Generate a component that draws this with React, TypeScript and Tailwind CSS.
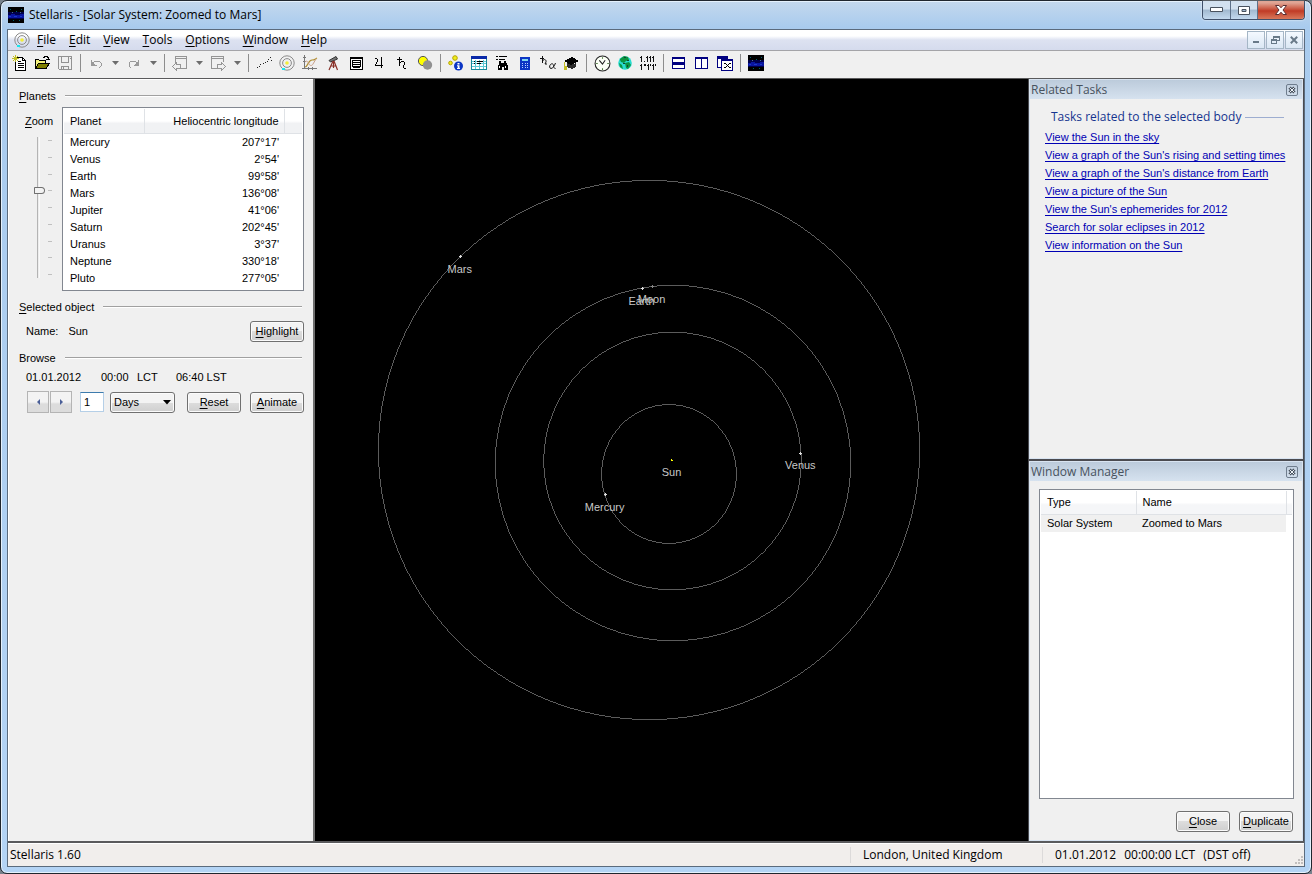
import type { ReactNode } from "react";

const ui = "font-['Open_Sans','Noto_Sans',sans-serif]";
const btn =
  "h-[21px] rounded-[3px] border border-[#707070] bg-linear-to-b from-[#f3f3f3] from-50% via-[#dddddd] via-50% to-[#cfcfcf] text-center shadow-[inset_0_0_0_1px_#fbfbfb]";

const planets: [string, string][] = [
  ["Mercury", "207°17'"],
  ["Venus", "2°54'"],
  ["Earth", "99°58'"],
  ["Mars", "136°08'"],
  ["Jupiter", "41°06'"],
  ["Saturn", "202°45'"],
  ["Uranus", "3°37'"],
  ["Neptune", "330°18'"],
  ["Pluto", "277°05'"],
];

const tasks = [
  "View the Sun in the sky",
  "View a graph of the Sun's rising and setting times",
  "View a graph of the Sun's distance from Earth",
  "View a picture of the Sun",
  "View the Sun's ephemerides for 2012",
  "Search for solar eclipses in 2012",
  "View information on the Sun",
];

const menus = ["File", "Edit", "View", "Tools", "Options", "Window", "Help"];

const bodies = [
  { name: "Mars", x: 144, y: 177, color: "#ddd" },
  { name: "Earth", x: 326, y: 209, color: "#ddd" },
  { name: "Moon", x: 336, y: 207, color: "#888" },
  { name: "Venus", x: 485, y: 374, color: "#ddd" },
  { name: "Sun", x: 356, y: 381, color: "#ff0" },
  { name: "Mercury", x: 289, y: 416, color: "#ddd" },
];

function Hot({ text }: { text: string }) {
  return (
    <>
      <span className="underline underline-offset-2">{text[0]}</span>
      {text.slice(1)}
    </>
  );
}

function Icon({ children, size = 16 }: { children: ReactNode; size?: number }) {
  return (
    <svg width={size} height={size} viewBox="0 0 16 16" fill="none" shapeRendering="crispEdges" aria-hidden="true">
      {children}
    </svg>
  );
}

function StarField({ size = 16 }: { size?: number }) {
  return (
    <Icon size={size}>
      <path fill="#000" d="M0 0h16v16H0z" />
      <path fill="#00004c" d="M0 5h16v7H0z" />
      <path fill="#0a16a0" d="M0 8h3V7h4v1h5V7h4v4H0z" />
      <path fill="#1c38c8" d="M1 9h2v1H1zM6 9h3v1H6zM12 9h2v1h-2z" />
      <path fill="#006070" d="M2 2h1v1H2zM8 4h1v1H8zM13 2h1v1h-1zM5 13h1v1H5zM11 13h1v1h-1z" />
      <path fill="#4a7090" d="M4 5h1v1H4zM12 5h1v1h-1z" />
    </Icon>
  );
}

function Orbits() {
  return (
    <svg width="16" height="16" viewBox="0 0 16 16" fill="none" aria-hidden="true">
      <circle cx="8" cy="8" r="7.2" stroke="#8a8a8a" />
      <circle cx="8" cy="8" r="4.4" stroke="#8a8a8a" />
      <circle cx="8" cy="8" r="1.8" fill="#f2ee3a" />
      <path d="M3 13h3v2H3z" fill="#18e6ee" />
    </svg>
  );
}

const icons: Record<string, ReactNode> = {
  New: (
    <Icon>
      <path d="M4.500 2.500h7l3 3v10h-10z" fill="#fff" stroke="#000" />
      <path d="M11.500 2.500v3h3M7 6.500h3M7 8.500h6M7 10.500h6M7 12.500h6" stroke="#000" />
      <path d="M4.500 0v7M1 3.500h7M2 1l5 5M7 1L2 6" stroke="#c3bf22" />
    </Icon>
  ),
  Open: (
    <Icon>
      <path d="M1.500 13.500v-9h3l1 1h6v3h-6z" fill="#f4f27c" stroke="#000" />
      <path d="M1.500 13.500l3-5h11l-3.500 5z" fill="#808000" stroke="#000" />
      <path d="M9 2.500h1v-1h3v1h1v2M12 4.500h4M14.500 2v3" stroke="#000" />
    </Icon>
  ),
  Save: (
    <Icon>
      <path d="M1.500 1.500h13v13h-12l-1-1zM4.500 2v5h7V2M4.500 15v-4h7v4M6.500 12v3M13 3.500h1" stroke="#929292" />
    </Icon>
  ),
  Undo: (
    <Icon>
      <path d="M3.500 5v5h5M4 9l3-3h4l2 2v3l-2 2" stroke="#999" />
      <path d="M3 6h1v1h1v1h1v1h1v2H3z" fill="#999" />
    </Icon>
  ),
  Redo: (
    <Icon>
      <path d="M12.500 5v5h-5M12 9L9 6H5L3 8v3l2 2" stroke="#999" />
      <path d="M13 6h-1v1h-1v1h-1v1H9v2h4z" fill="#999" />
    </Icon>
  ),
  Back: (
    <Icon>
      <path d="M3.500 8V1.500h11v12H8M4 3.500h10M.500 11.500l4-4v2h4v4h-4v2z" stroke="#959595" />
    </Icon>
  ),
  Forward: (
    <Icon>
      <path d="M13.500 7V1.500h-12v12H8M2 3.500h11M15.500 11.500l-4-4v2h-4v4h4v2z" stroke="#959595" />
    </Icon>
  ),
  Path: (
    <Icon>
      <path fill="#222" d="M1 12h1v1H1zM3 11h1v1H3zM4 9h1v1H4zM7 8h1v1H7zM9 7h1v1H9zM11 6h1v1h-1zM12 4h1v1h-1zM14 2h1v1h-1zM15 5h1v1h-1z" />
    </Icon>
  ),
  "Solar System": <Orbits />,
  Graph: (
    <svg width="16" height="16" viewBox="0 0 16 16" fill="none" aria-hidden="true">
      <path d="M2.500 0v14M0 13.500h15M1 2.500h3M1 6.500h3M6.500 12v3M10.500 12v3" stroke="#777" />
      <path d="M3 12C6 12 6 5 10 5c3 0 3-1 5-2" stroke="#b08f30" strokeWidth="1.200" />
      <path d="M3 7c2-2 3 0 4 2s3 2 4 0l3-5" stroke="#c9a08a" />
    </svg>
  ),
  Telescope: (
    <svg width="16" height="16" viewBox="0 0 16 16" fill="none" aria-hidden="true">
      <path d="M4 5.500l7-4 1.500 2.500-7 3z" fill="#777" stroke="#333" />
      <path d="M8.500 6v7M8 6l-4 9M9 6l3.500 9M6 11h5" stroke="#8a3028" strokeWidth="1.200" />
    </svg>
  ),
  List: (
    <Icon>
      <path d="M2.500 2.500h12v12h-12z" fill="#fff" stroke="#000" />
      <path d="M3 3h11v1H3zM4 5h9v1H4zM5 7h7v1H5zM5 9h7v1H5zM5 11h7v1H5zM4 5h1v8H4zM12 5h1v8h-1zM4 13h9v-1H4z" fill="#000" />
    </Icon>
  ),
  Jupiter: (
    <Icon>
      <path d="M4 3.500h2M6.500 4v3M5.500 7v2M4.500 9v2M4 10.500h8M10.500 2v11" stroke="#000" />
    </Icon>
  ),
  Saturn: (
    <Icon>
      <path d="M3 4.500h5M5.500 2v9M6 7.500h1M7 6.500h3M10.500 7v3M9.500 10v3M10 13.500h2" stroke="#000" />
    </Icon>
  ),
  Eclipse: (
    <svg width="16" height="16" viewBox="0 0 16 16" aria-hidden="true">
      <circle cx="6" cy="6" r="4.600" fill="#ff0" stroke="#555" />
      <circle cx="10.500" cy="10" r="4.700" fill="#919191" />
    </svg>
  ),
  "Planet information": (
    <svg width="16" height="16" viewBox="0 0 16 16" aria-hidden="true">
      <circle cx="7" cy="3" r="2.300" fill="#eded20" stroke="#b9a400" />
      <circle cx="2.500" cy="8" r="1.800" fill="#eded20" stroke="#b9a400" />
      <circle cx="10.500" cy="11" r="4.500" fill="#0b35c4" />
      <path d="M9.500 8h2v1.500h-2zM9 10.200h2.500V13H12v1H9v-1h.700v-1.800H9z" fill="#fff" />
    </svg>
  ),
  Calendar: (
    <Icon>
      <path d="M.500 2.500h15v12H.500z" fill="#fff" stroke="#168a9a" />
      <path d="M1 6.500h14M1 8.500h14M1 11.500h14M4.500 5v9M8.500 5v9M12.500 5v9" stroke="#5cc8d4" />
      <path d="M0 1h16v3H0z" fill="#0828a8" />
      <path d="M3 6.500h1M6 6.500h6M3 8.500h1M6 8.500h4" stroke="#000" />
    </Icon>
  ),
  Search: (
    <Icon>
      <path d="M2 1h2v1H2zM5 1h8v1H5zM2 4h2v1H2zM5 4h6v1H5z" fill="#000" />
      <path d="M5 6h2v2h3V6h2v2h1v2h1v5h-4v-3H8v3H4v-5h1z" fill="#000" />
      <path d="M5 11h1v2H5zM11 11h1v2h-1z" fill="#fff" />
    </Icon>
  ),
  Calculator: (
    <Icon>
      <path d="M3 2h10v13H3z" fill="#0b35c4" />
      <path d="M5 4h6v2H5z" fill="#83d6f0" />
      <path d="M5 8h1v1H5zM7.500 8h1v1h-1zM10 8h1v1h-1zM5 10h1v1H5zM7.500 10h1v1h-1zM10 10h1v1h-1zM5 12h1v1H5zM7.500 12h1v1h-1zM10 12h1v1h-1z" fill="#b8ccff" />
    </Icon>
  ),
  Symbols: (
    <svg width="16" height="16" viewBox="0 0 16 16" fill="none" stroke="#111" aria-hidden="true">
      <path d="M0 3.500h4M2.500 1v7M2.500 6c1.500-2.500 4-1.500 3.500 1L5 9h2" />
      <path d="M15.500 8c-1 3-3 5.500-4.500 5.500S9 11 10.500 9.500s3-.5 3 1 .5 3 2 3" />
    </svg>
  ),
  Learn: (
    <Icon>
      <path d="M1 6l8-4 7 4-8 4z" fill="#000" />
      <path d="M4 8l4 2 5-2v4l-4 2-5-2z" fill="#2b2b2b" />
      <path d="M1 7h1v4h2v4H1v-3h0z" fill="#c3bd28" />
    </Icon>
  ),
  Clock: (
    <svg width="17" height="17" viewBox="0 0 16 16" fill="none" stroke="#222" aria-hidden="true">
      <circle cx="8" cy="8" r="7" fill="#fbfff6" />
      <path d="M8 2v1.500M8 12.500V14M2 8h1.500M12.500 8H14" stroke="#4a7a3a" />
      <path d="M5 5l3 3.500L10.500 5" />
    </svg>
  ),
  Location: (
    <svg width="16" height="16" viewBox="0 0 16 16" aria-hidden="true">
      <circle cx="8" cy="8" r="6.800" fill="#28dcd0" />
      <path d="M3 4l4-3 4 1 1 3-3 1-2 2-3-1-1-2zM8 8l4-1 2 3-3 4-2-1zM2 8l3 2 1 4-3-2z" fill="#0b9440" />
      <path d="M7 2h2v1H7zM10 5h2v1h-2zM6 8h2v1H6zM10 10h1v2h-1z" fill="#143" />
    </svg>
  ),
  "Number format": (
    <Icon>
      <path d="M1 1h1v6H1zM0 2h1v1H0zM4 6h1v1H4zM7 1h1v6H7zM6 2h1v1H6zM10 1h1v6h-1zM9 2h1v1H9zM13 1h1v6h-1zM12 2h1v1h-1zM1 9h1v6H1zM0 10h1v1H0zM4 9h2v2H4zM8 9h1v6H8zM7 10h1v1H7zM10 9h1v2h-1zM13 9h1v6h-1zM12 10h1v1h-1zM15 9h1v2h-1z" fill="#111" />
    </Icon>
  ),
  "Tile horizontally": (
    <Icon>
      <path d="M1.500 2.500h12v5h-12zM1.500 8.500h12v5h-12z" fill="#fff" stroke="#000080" />
      <path d="M1 2h13v2H1zM1 8h13v2H1z" fill="#000080" />
    </Icon>
  ),
  "Tile vertically": (
    <Icon>
      <path d="M1.500 2.500h6v11h-6zM7.500 2.500h6v11h-6z" fill="#fff" stroke="#000080" />
      <path d="M1 2h13v2H1z" fill="#000080" />
    </Icon>
  ),
  "Close all": (
    <Icon>
      <path d="M.500 1.500h10v11H.500z" fill="#fff" stroke="#000080" />
      <path d="M0 1h11v3H0z" fill="#000080" />
      <path d="M4.500 4.500h11v11h-11z" fill="#fff" stroke="#000080" />
      <path d="M4 4h12v2H4z" fill="#000080" />
      <path d="M7 8h2v1H7zM12 8h2v1h-2zM9 9h1v1H9zM11 9h1v1h-1zM10 10h1v1h-1zM9 11h1v1H9zM11 11h1v1h-1zM7 12h2v1H7zM12 12h2v1h-2z" fill="#000" />
    </Icon>
  ),
  "Sky view": <StarField />,
};

const groups: string[][] = [
  ["New", "Open", "Save"],
  ["Undo", "v", "Redo", "v"],
  ["Back", "v", "Forward", "v"],
  ["Path", "Solar System", "Graph", "Telescope", "List", "Jupiter", "Saturn", "Eclipse"],
  ["Planet information", "Calendar", "Search", "Calculator", "Symbols", "Learn"],
  ["Clock", "Location", "Number format"],
  ["Tile horizontally", "Tile vertically", "Close all"],
  ["Sky view"],
];

function Toolbar() {
  return (
    <div className="flex h-[27px] items-center bg-[#f0f0f0] pb-[3px]" role="toolbar">
      {groups.map((group, g) => (
        <div key={g} className="flex items-center">
          {g > 0 && <span className="mr-1 ml-[3px] h-[18px] w-px bg-[#8d8d8d]" />}
          {group.map((name, i) =>
            name === "v" ? (
              <button key={i} aria-label="History" className="flex h-6 w-[15px] items-center justify-center">
                <svg width="7" height="4" viewBox="0 0 7 4" aria-hidden="true">
                  <path d="M0 0h7L3.500 4z" fill="#6d6d6d" />
                </svg>
              </button>
            ) : (
              <button key={i} aria-label={name} className="flex h-6 w-[23px] items-center pl-[3px]">
                {icons[name]}
              </button>
            ),
          )}
        </div>
      ))}
    </div>
  );
}

function Heading({ children }: { children: ReactNode }) {
  return (
    <h2 className="flex h-4 items-center gap-[9px] whitespace-nowrap">
      {children}
      <span className="h-0.5 flex-1 border-t border-b border-t-[#a0a0a0] border-b-white" />
    </h2>
  );
}

function Sidebar() {
  return (
    <aside className="flex w-[307px] shrink-0 flex-col border-r-2 border-[#6e6e6e] bg-[#f0f0f0] pt-[9px] pr-[9px] pl-[11px] shadow-[inset_1px_1px_0_#fff]">
      <div className="pr-0.5">
        <Heading>
          <span>
            <Hot text="Planets" />
          </span>
        </Heading>
      </div>
      <div className="mt-[3px] flex justify-between">
        <div className="pt-1.5 pl-1.5">
          <label htmlFor="zoom" className="block h-4 leading-4">
            <Hot text="Zoom" />
          </label>
          <div className="mt-2 flex pl-[9px]">
            <input
              id="zoom"
              type="range"
              min={0}
              max={8}
              defaultValue={3}
              className="m-0 h-[141px] w-[11px] appearance-none bg-[linear-gradient(90deg,transparent_3px,#b4b4b4_3px,#b4b4b4_4px,#e8e8e8_4px,#ffffff_6px,transparent_6px)] [writing-mode:vertical-lr] [&::-webkit-slider-thumb]:h-[7px] [&::-webkit-slider-thumb]:w-[11px] [&::-webkit-slider-thumb]:appearance-none [&::-webkit-slider-thumb]:rounded-l-[1px] [&::-webkit-slider-thumb]:rounded-r-[4px] [&::-webkit-slider-thumb]:border [&::-webkit-slider-thumb]:border-[#707070] [&::-webkit-slider-thumb]:bg-[#f3f3f3]"
            />
            <div className="ml-[3px] flex flex-col justify-between py-[3px]">
              {planets.map(([name]) => (
                <span key={name} className="h-px w-1 bg-[#c0c0c0]" />
              ))}
            </div>
          </div>
        </div>
        <div className="h-[184px] w-[242px] border border-[#828790] bg-white p-px">
          <table className="w-full border-collapse">
            <thead>
              <tr className="h-6 bg-linear-to-b from-white from-50% to-[#f1f2f4] to-60%">
                <th className="w-20 border-r border-b border-[#dfe2e6] pl-1.5 text-left font-normal">Planet</th>
                <th className="w-[140px] border-r border-b border-[#dfe2e6] pr-[5px] text-right font-normal">
                  Heliocentric longitude
                </th>
                <th className="border-b border-[#dfe2e6]" />
              </tr>
            </thead>
            <tbody>
              {planets.map(([name, lon]) => (
                <tr key={name} className="h-[17px] leading-4">
                  <td className="pl-1.5">{name}</td>
                  <td className="pr-[5px] text-right">{lon}</td>
                  <td />
                </tr>
              ))}
            </tbody>
          </table>
        </div>
      </div>
      <div className="mt-2 pr-0.5">
        <Heading>
          <span>
            <Hot text="Selected object" />
          </span>
        </Heading>
      </div>
      <div className="mt-1.5 flex items-center pl-[7px]">
        <span>Name:</span>
        <span className="ml-2.5 flex-1">Sun</span>
        <button className={`w-[54px] ${btn}`}>
          <Hot text="Highlight" />
        </button>
      </div>
      <div className="mt-2 pr-0.5">
        <Heading>Browse</Heading>
      </div>
      <div className="mt-[3px] flex h-4 items-center pl-[7px]">
        <span className="w-[75px]">01.01.2012</span>
        <span className="w-9">00:00</span>
        <span className="w-[39px]">LCT</span>
        <span>06:40 LST</span>
      </div>
      <div className="mt-1.5 flex items-center pl-2">
        {["M4 0v6L1 3z", "M1 0v6l3-3z"].map((d, i) => (
          <button
            key={d}
            aria-label={i ? "Next" : "Previous"}
            className="flex h-[22px] w-[22px] items-center justify-center border border-[#b4b4b4] bg-linear-to-b from-[#f3f3f3] from-50% to-[#dcdcdc] to-60% not-first:ml-px"
          >
            <svg width="5" height="6" viewBox="0 0 5 6" aria-hidden="true">
              <path d={d} fill="#4a5f97" />
            </svg>
          </button>
        ))}
        <input
          aria-label="Step"
          defaultValue="1"
          autoFocus
          className="ml-2 h-5 w-6 border border-[#b5cfe7] border-t-[#3d7bad] bg-white px-[3px] outline-none"
        />
        <div className="relative ml-1.5 flex">
          <select aria-label="Unit" className={`w-[65px] appearance-none pl-[3px] !text-left ${btn}`}>
            <option>Days</option>
          </select>
          <svg width="8" height="5" viewBox="0 0 8 5" className="pointer-events-none absolute top-2 right-1" aria-hidden="true">
            <path d="M0 0h8L4 4.500z" fill="#000" />
          </svg>
        </div>
        <div className="flex flex-1 justify-end gap-[9px]">
          <button className={`w-[54px] ${btn}`}>
            <Hot text="Reset" />
          </button>
          <button className={`w-[54px] ${btn}`}>
            <Hot text="Animate" />
          </button>
        </div>
      </div>
    </aside>
  );
}

function SolarMap() {
  return (
    <main className="flex min-w-0 flex-1 overflow-hidden bg-black">
      <svg viewBox="0 0 712 763" className="h-0 min-h-full w-full" role="img" aria-label="Solar system map">
        <g fill="none" stroke="#5c5c5c" strokeWidth="1" shapeRendering="crispEdges">
          <ellipse cx="333.500" cy="371.500" rx="271" ry="270" />
          <circle cx="357.500" cy="384.500" r="178" />
          <circle cx="357" cy="382.500" r="129" />
          <ellipse cx="353.500" cy="395.500" rx="67.500" ry="69.500" />
        </g>
        {bodies.map((b) => (
          <g key={b.name}>
            <path
              d={`M${b.x - 1} ${b.y + 0.5}h3M${b.x + 0.5} ${b.y - 1}v3`}
              stroke={b.color}
              shapeRendering="crispEdges"
            />
            <text x={b.x} y={b.y + 17} fill="#c8c8c8" textAnchor="middle" className="text-[11px]">
              {b.name}
            </text>
          </g>
        ))}
      </svg>
    </main>
  );
}

function PanelTitle({ children }: { children: string }) {
  return (
    <header
      className={`flex h-[19px] items-center justify-between bg-linear-to-b from-[#bccbdb] to-[#d6e2ef] pr-1 pl-px text-xs text-[#47525e] ${ui}`}
    >
      <h2>{children}</h2>
      <button aria-label={`Close ${children}`} className="flex h-3 w-3 items-center justify-center rounded-[2px] border border-[#6f7d8d]">
        <svg width="8" height="8" viewBox="0 0 8 8" aria-hidden="true">
          <path d="M1.500 1.500l5 5M6.500 1.500l-5 5" stroke="#48525e" strokeWidth="3" />
          <path d="M1.500 1.500l5 5M6.500 1.500l-5 5" stroke="#eef3f8" />
        </svg>
      </button>
    </header>
  );
}

function RightPanels() {
  return (
    <aside className="flex w-[276px] shrink-0 flex-col gap-0.5 border-r border-l border-[#4b4b50] bg-[#4b4b50]">
      <section className="flex-1 basis-0 border border-[#d9e4f1] bg-[#f0f0f0]">
        <PanelTitle>Related Tasks</PanelTitle>
        <h3 className={`mt-2.5 mr-[18px] ml-[21px] flex items-center gap-1 text-xs leading-4 text-[#15348f] ${ui}`}>
          Tasks related to the selected body
          <span className="h-px flex-1 bg-[#9dadd0]" />
        </h3>
        <ul className="mt-[3px] ml-[15px] leading-[18px]">
          {tasks.map((t) => (
            <li key={t}>
              <a href="#" className="text-[#0000b4] underline underline-offset-2">
                {t}
              </a>
            </li>
          ))}
        </ul>
      </section>
      <section className="flex flex-1 basis-0 flex-col border border-[#d9e4f1] bg-[#f0f0f0]">
        <PanelTitle>Window Manager</PanelTitle>
        <div className="mr-2 ml-[9px] mt-2 flex-1 border border-[#828790] bg-white p-px">
          <table className="w-full border-collapse">
            <thead>
              <tr className="h-[23px] bg-linear-to-b from-white from-50% to-[#f5f6f8] to-60%">
                <th className="w-[95px] border-r border-b border-[#dfe2e6] pl-1.5 text-left font-normal">Type</th>
                <th className="border-r border-b border-[#dfe2e6] pl-1.5 text-left font-normal">Name</th>
                <th className="w-1.5 border-b border-[#dfe2e6]" />
              </tr>
            </thead>
            <tbody>
              <tr className="h-[18px]">
                <td className="bg-[#f0f0f0] pl-1.5">Solar System</td>
                <td className="bg-[#f0f0f0] pl-1.5">Zoomed to Mars</td>
                <td />
              </tr>
            </tbody>
          </table>
        </div>
        <div className="mt-3 mr-[9px] mb-2 flex justify-end gap-[9px]">
          <button className={`w-[54px] ${btn}`}>
            <Hot text="Close" />
          </button>
          <button className={`w-[54px] ${btn}`}>
            <Hot text="Duplicate" />
          </button>
        </div>
      </section>
    </aside>
  );
}

function TitleBar() {
  return (
    <header className="flex h-7 items-start justify-between pl-px">
      <div className="flex h-7 items-center gap-[5px]">
        <StarField />
        <h1 className={`text-xs text-black ${ui}`}>Stellaris - [Solar System: Zoomed to Mars]</h1>
      </div>
      <div className="flex h-[19px] overflow-hidden rounded-b-[4px] border border-t-0 border-[#40506a] shadow-[0_0_2px_#fff]">
        <button
          aria-label="Minimize"
          className="flex w-7 items-center justify-center border-r border-[#5d7088] bg-linear-to-b from-[#d3e1ef] from-45% via-[#a1b8cf] via-50% to-[#c3d9ee]"
        >
          <svg width="13" height="6" viewBox="0 0 13 6" aria-hidden="true">
            <path d="M.5.5h12v4H.5z" fill="#fff" stroke="#49525e" />
          </svg>
        </button>
        <button
          aria-label="Restore"
          className="flex w-[27px] items-center justify-center border-r border-[#5d7088] bg-linear-to-b from-[#d3e1ef] from-45% via-[#a1b8cf] via-50% to-[#c3d9ee]"
        >
          <svg width="12" height="9" viewBox="0 0 12 9" aria-hidden="true">
            <path d="M.5.5h11v8H.5zM4 3.500v2h4v-2z" fill="#fff" stroke="#49525e" fillRule="evenodd" />
          </svg>
        </button>
        <button
          aria-label="Close"
          className="flex w-[46px] items-center justify-center bg-linear-to-b from-[#e0a595] from-10% via-[#c03a25] via-55% to-[#d8775a]"
        >
          <svg width="12" height="10" viewBox="0 0 12 10" aria-hidden="true">
            <path d="M.5.5h3.500L6 2.800 8 .500h3.500L8 5l3.500 4.500H8L6 7.200 4 9.500H.5L4 5z" fill="#fff" stroke="#5a2f33" />
          </svg>
        </button>
      </div>
    </header>
  );
}

function MenuBar() {
  const box = "flex h-[18px] w-[18px] items-center justify-center border border-[#a5b6c6] bg-linear-to-b from-[#f4f9ff] to-[#dbe7f4]";
  return (
    <nav className="flex h-[21px] items-center justify-between border-b border-[#a4a4a8] bg-linear-to-b from-white from-30% via-[#dde2f1] via-50% to-[#d5dbed] pr-px">
      <div className="flex items-center gap-px pl-1.5">
        <Orbits />
        {menus.map((m) => (
          <button key={m} className={`px-1.5 text-xs leading-4 ${ui}`}>
            <Hot text={m} />
          </button>
        ))}
      </div>
      <div className="flex gap-px">
        <button aria-label="Minimize document" className={box}>
          <svg width="8" height="8" viewBox="0 0 8 8" aria-hidden="true">
            <path d="M1 5h6v2H1z" fill="#687988" />
          </svg>
        </button>
        <button aria-label="Restore document" className={box}>
          <svg width="9" height="8" viewBox="0 0 9 8" fill="none" stroke="#687988" shapeRendering="crispEdges" aria-hidden="true">
            <path d="M2.500 3V.500h6v4H6M2 1.500h7M.500 3.500h5v4h-5zM0 4.500h6" />
          </svg>
        </button>
        <button aria-label="Close document" className={box}>
          <svg width="8" height="8" viewBox="0 0 8 8" aria-hidden="true">
            <path d="M.8.8l6.400 6.400M7.200.8L.8 7.200" stroke="#687988" strokeWidth="2" />
          </svg>
        </button>
      </div>
    </nav>
  );
}

function StatusBar() {
  return (
    <footer className={`flex h-[23px] items-center border-t border-white bg-[#f1eeec] pl-0.5 text-xs leading-4 ${ui}`}>
      <span className="flex-1">Stellaris 1.60</span>
      <span className="w-48 border-l border-[#dcdada] pl-3">London, United Kingdom</span>
      <span className="flex w-[252px] gap-2 border-l border-[#dcdada] pl-3">
        <span>01.01.2012</span>
        <span>00:00:00 LCT</span>
        <span>(DST off)</span>
      </span>
      <svg width="10" height="10" viewBox="0 0 10 10" className="self-end" shapeRendering="crispEdges" aria-hidden="true">
        <path d="M7 0h2v2H7zM4 3h2v2H4zM7 3h2v2H7zM1 6h2v2H1zM4 6h2v2H4zM7 6h2v2H7z" fill="#c2bfbe" />
      </svg>
    </footer>
  );
}

export default function App() {
  return (
    <div className="flex min-h-screen bg-[#77818c] font-['Liberation_Sans',Arial,sans-serif] text-[11px] text-black">
      <div className="flex min-w-0 flex-1 flex-col rounded-[7px] border border-[#20262e] bg-linear-to-b from-[#c4d8ed] via-[#a9cbee] via-3% to-[#b4d4f5] px-1.5 pb-1.5 shadow-[inset_0_0_0_1px_#e5f1fc]">
        <TitleBar />
        <div className="flex flex-1 flex-col border border-[#5b6b7d] bg-[#f0f0f0]">
          <MenuBar />
          <Toolbar />
          <div className="flex flex-1 border-t border-b-2 border-[#5a5a5c]">
            <Sidebar />
            <SolarMap />
            <RightPanels />
          </div>
          <StatusBar />
        </div>
      </div>
    </div>
  );
}
